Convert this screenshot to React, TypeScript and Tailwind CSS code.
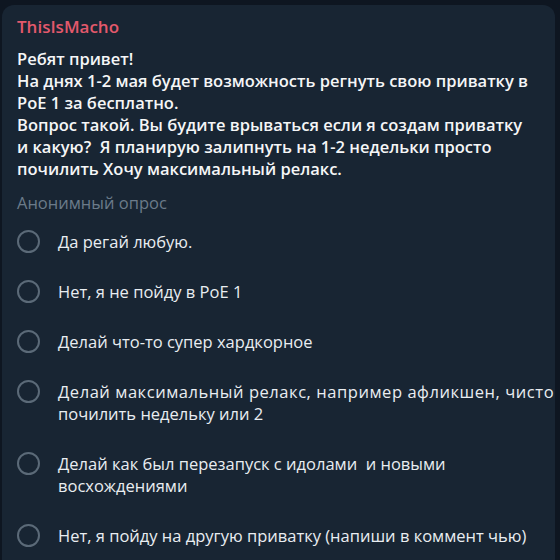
type Option = { lines: string[]; firstLineClass?: string };

const options: Option[] = [
  { lines: ["Да регай любую."] },
  { lines: ["Нет, я не пойду в PoE 1"] },
  { lines: ["Делай что-то супер хардкорное"] },
  {
    lines: ["Делай максимальный релакс, например афликшен, чисто", "почилить недельку или 2"],
    firstLineClass: "tracking-[0.55px]",
  },
  { lines: ["Делай как был перезапуск с идолами  и новыми", "восхождениями"] },
  { lines: ["Нет, я пойду на другую приватку (напиши в коммент чью)"] },
];

function PollOption({ option }: { option: Option }) {
  return (
    <div className="flex items-start">
      <span className="mt-[-1px] h-[23px] w-[23px] shrink-0 rounded-full border-2 border-[#5b6a78]" />
      <span className="ml-[18px] whitespace-pre text-[16.5px] leading-[22px] text-[#e9edf1]">
        {option.lines.map((line, i) => (
          <span key={i} className={i === 0 ? "block " + (option.firstLineClass ?? "") : "block"}>
            {line}
          </span>
        ))}
      </span>
    </div>
  );
}

export default function App() {
  return (
    <div
      className="h-[560px] w-[560px] overflow-hidden bg-[#0e1621] pt-[5px]"
      style={{ fontFamily: '"Open Sans", "Noto Sans", sans-serif' }}
    >
      <div className="ml-[2px] h-[600px] w-[553px] rounded-t-[12px] bg-[#182533] pl-[15px] pt-[11px]">
        <div className="text-[17px] font-semibold leading-[22px] text-[#e3596c]">ThisIsMacho</div>
        <div className="mt-[10px] pr-[23px] text-[16.5px] font-semibold leading-[22px] text-[#f5f6f7]">
          Ребят привет!
          <br />
          На днях 1-2 мая будет возможность регнуть свою приватку в PoE 1 за бесплатно.
          <br />
          Вопрос такой. Вы будите врываться если я создам приватку и какую?&nbsp; Я планирую залипнуть на 1-2 недельки просто почилить Хочу максимальный релакс.
        </div>
        <div className="mt-[12px] text-[16.5px] leading-[22px] text-[#6b7b8a]">Анонимный опрос</div>
        <div className="mt-[17px] flex flex-col gap-[28px]">
          {options.map((o) => (
            <PollOption key={o.lines[0]} option={o} />
          ))}
        </div>
      </div>
    </div>
  );
}
